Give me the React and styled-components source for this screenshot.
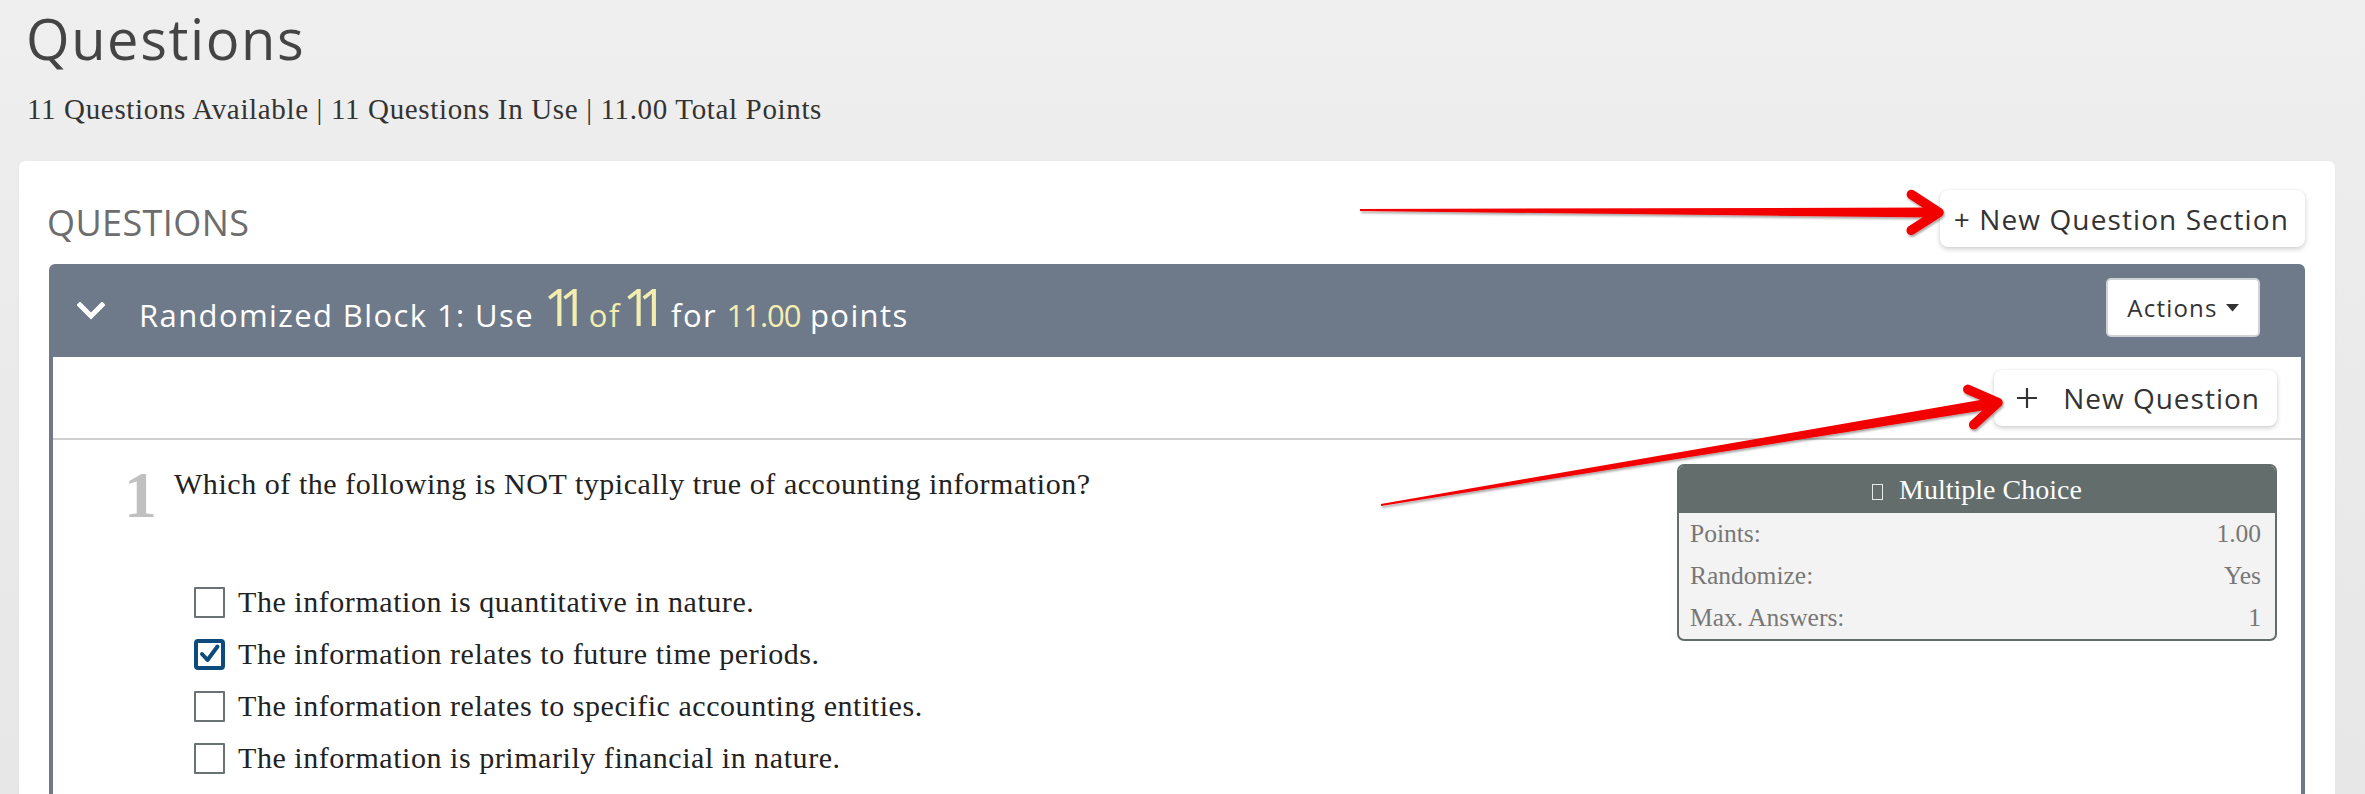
import React from "react";
import styled, { createGlobalStyle } from "styled-components";

const GlobalStyle = createGlobalStyle`
  html, body { margin: 0; padding: 0; }
  body {
    background: linear-gradient(to bottom, #efefef 0%, #ebebeb 40%, #e7e7e7 100%);
    font-family: "Open Sans", sans-serif;
  }
  * { box-sizing: border-box; }
`;

const Page = styled.div`
  position: relative;
  height: 794px;
  overflow: hidden;
  padding: 0 30px 0 19px;
`;

const Title = styled.h1`
  margin: 0;
  padding: 10px 0 0 7px;
  font: 400 56px/56px "Open Sans", sans-serif;
  letter-spacing: 1.6px;
  color: #444;
`;

const Summary = styled.div`
  margin-top: 29px;
  padding-left: 8px;
  font: 400 29px/29px "Liberation Serif", serif;
  letter-spacing: 0.65px;
  color: #333;
`;

const Card = styled.section`
  margin-top: 37px;
  background: #fff;
  border-radius: 6px 6px 0 0;
  padding: 0 30px;
  min-height: 640px;
  box-shadow: 0 0 3px rgba(0, 0, 0, 0.04);
`;

const CardHeader = styled.div`
  display: flex;
  justify-content: space-between;
  align-items: flex-start;
  padding-top: 29px;
`;

const SectionHeading = styled.h2`
  margin: 15px 0 0 -2px;
  font: 400 36px/36px "Open Sans", sans-serif;
  letter-spacing: 0.4px;
  color: #6d6d6d;
`;

const RaisedButton = styled.button`
  display: inline-flex;
  align-items: center;
  gap: ${(p) => p.$gap || 0}px;
  height: ${(p) => p.$h || 57}px;
  padding: 0 ${(p) => p.$pr || 16}px 0 ${(p) => p.$pl || 14}px;
  background: #fff;
  border: none;
  border-radius: 8px;
  box-shadow: 0 2px 5px rgba(0, 0, 0, 0.2), 0 0 1px rgba(0, 0, 0, 0.08);
  font: 400 28px/1 "Open Sans", sans-serif;
  letter-spacing: ${(p) => p.$ls ?? 1.1}px;
  color: #333;
  cursor: pointer;
`;

const Block = styled.div`
  margin-top: 17px;
`;

const BlockHeader = styled.div`
  display: flex;
  align-items: center;
  height: 93px;
  padding: 0 45px 0 28px;
  background: #6e7a89;
  border-radius: 6px 6px 0 0;
`;

const BlockTitle = styled.div`
  flex: 1;
  margin-left: 34px;
  font: 400 31px/50px "Open Sans", sans-serif;
  letter-spacing: 1.4px;
  color: #fff;
  white-space: nowrap;
`;

const Hl = styled.span`
  color: #f3eeb0;
  letter-spacing: ${(p) => p.$ls ?? 1.4}px;
`;

const BigNum = styled.span`
  color: #f3eeb0;
  font-size: 51px;
  letter-spacing: -14px;
  margin-right: 12px;
  position: relative;
  top: -1px;
`;

const Gap = styled.span`
  display: inline-block;
  width: ${(p) => p.$w}px;
`;

const ActionsButton = styled.button`
  display: inline-flex;
  align-items: center;
  gap: 8px;
  height: 59px;
  width: 154px;
  justify-content: center;
  background: #fff;
  border: 2px solid #cfd2d6;
  border-radius: 5px;
  font: 400 24px/1 "Open Sans", sans-serif;
  letter-spacing: 1.2px;
  color: #333;
  margin-top: -6px;
`;

const BlockBody = styled.div`
  background: #fff;
  border-left: 4px solid #6e7a89;
  border-right: 4px solid #6e7a89;
  min-height: 500px;
`;

const Toolbar = styled.div`
  display: flex;
  justify-content: flex-end;
  padding: 13px 24px 12px;
  border-bottom: 2px solid #d0d0d0;
`;

const QuestionRow = styled.div`
  display: flex;
  align-items: flex-start;
  padding: 22px 24px 0 71px;
`;

const QNum = styled.div`
  font: 700 66px/66px "Liberation Serif", serif;
  color: #c0c0c0;
  width: 50px;
`;

const QMain = styled.div`
  flex: 1;
  margin-top: 2px;
`;

const QText = styled.div`
  font: 400 30px/40px "Liberation Serif", serif;
  letter-spacing: 0.55px;
  color: #222;
`;

const Options = styled.div`
  margin: 72px 0 0 20px;
  display: flex;
  flex-direction: column;
`;

const Option = styled.label`
  display: flex;
  align-items: center;
  gap: 13px;
  height: 52px;
  font: 400 30px/52px "Liberation Serif", serif;
  letter-spacing: 0.55px;
  color: #222;
`;

const Box = styled.span`
  flex: none;
  width: 31px;
  height: 31px;
  border: ${(p) => (p.$checked ? "4px solid #0d4b7c" : "2px solid #6b7274")};
  border-radius: ${(p) => (p.$checked ? 4 : 1)}px;
  background: #fff;
  display: flex;
  align-items: center;
  justify-content: center;
`;

const InfoBox = styled.div`
  flex: none;
  width: 600px;
  margin-top: 2px;
  border: 2px solid #636e6c;
  border-radius: 7px;
  overflow: hidden;
  background: #f3f3f3;
`;

const InfoHead = styled.div`
  height: 47px;
  display: flex;
  align-items: center;
  justify-content: center;
  background: #636e6c;
  color: #fff;
  font: 400 28px/1 "Liberation Serif", serif;
`;

const Tofu = styled.span`
  display: inline-block;
  width: 11px;
  height: 16px;
  border: 1px solid #e8e8e8;
  margin: 4px 16px 0 0;
`;

const InfoRow = styled.div`
  display: flex;
  justify-content: space-between;
  height: 42px;
  padding: 0 14px 0 11px;
  font: 400 25.5px/42px "Liberation Serif", serif;
  color: #777;
`;

const Overlay = styled.svg`
  position: absolute;
  left: 0;
  top: 0;
  pointer-events: none;
`;

function Chevron() {
  return (
    <svg width="28" height="18" viewBox="0 0 28 18">
      <path d="M3 3 L14 14 L25 3" fill="none" stroke="#fff" strokeWidth="5" strokeLinecap="square" strokeLinejoin="miter" />
    </svg>
  );
}

function Caret() {
  return (
    <svg width="13" height="8" viewBox="0 0 13 8">
      <path d="M0 0 H13 L6.5 7.5 Z" fill="#333" />
    </svg>
  );
}

function Plus() {
  return (
    <svg width="22" height="22" viewBox="0 0 22 22">
      <path d="M11 1 V21 M1 11 H21" stroke="#333" strokeWidth="2.2" />
    </svg>
  );
}

function Check() {
  return (
    <svg width="23" height="23" viewBox="0 0 23 23">
      <path d="M4 11 L9.5 17 L19.5 3.5" fill="none" stroke="#0d4b7c" strokeWidth="4" strokeLinecap="round" strokeLinejoin="round" />
    </svg>
  );
}

function Arrow({ from, to, tailW = 2, headW = 10, arm = 33, spread = 33, sw = 9.5 }) {
  const [x1, y1] = from;
  const [x2, y2] = to;
  const dx = x2 - x1;
  const dy = y2 - y1;
  const len = Math.hypot(dx, dy);
  const ux = dx / len;
  const uy = dy / len;
  const px = -uy;
  const py = ux;
  const ex = x2 - ux * 4;
  const ey = y2 - uy * 4;
  const pts = [
    [x1 + (px * tailW) / 2, y1 + (py * tailW) / 2],
    [ex + (px * headW) / 2, ey + (py * headW) / 2],
    [ex - (px * headW) / 2, ey - (py * headW) / 2],
    [x1 - (px * tailW) / 2, y1 - (py * tailW) / 2],
  ];
  const bx = -ux;
  const by = -uy;
  const a = (spread * Math.PI) / 180;
  const rot = (ang) => [bx * Math.cos(ang) - by * Math.sin(ang), bx * Math.sin(ang) + by * Math.cos(ang)];
  const [ax, ay] = rot(a);
  const [cx, cy] = rot(-a);
  return (
    <g filter="url(#ashadow)">
      <polygon points={pts.map((p) => p.join(",")).join(" ")} fill="#f20000" />
      <polyline
        points={`${x2 + ax * arm},${y2 + ay * arm} ${x2},${y2} ${x2 + cx * arm},${y2 + cy * arm}`}
        fill="none"
        stroke="#f20000"
        strokeWidth={sw}
        strokeLinecap="round"
        strokeLinejoin="round"
      />
    </g>
  );
}

const options = [
  { text: "The information is quantitative in nature.", checked: false },
  { text: "The information relates to future time periods.", checked: true },
  { text: "The information relates to specific accounting entities.", checked: false },
  { text: "The information is primarily financial in nature.", checked: false },
];

const info = [
  ["Points:", "1.00"],
  ["Randomize:", "Yes"],
  ["Max. Answers:", "1"],
];

export default function App() {
  return (
    <>
      <GlobalStyle />
      <Page>
        <Title>Questions</Title>
        <Summary>11 Questions Available | 11 Questions In Use | 11.00 Total Points</Summary>
        <Card>
          <CardHeader>
            <SectionHeading>QUESTIONS</SectionHeading>
            <RaisedButton>+ New Question Section</RaisedButton>
          </CardHeader>
          <Block>
            <BlockHeader>
              <Chevron />
              <BlockTitle>
                Randomized Block 1: Use <BigNum>11</BigNum>
                <Gap $w={3} />
                <Hl>of</Hl>
                <Gap $w={2} />
                <BigNum>11</BigNum>
                <Gap $w={6} />
                for <Hl $ls={-1}>11.00</Hl> points
              </BlockTitle>
              <ActionsButton>
                Actions
                <Caret />
              </ActionsButton>
            </BlockHeader>
            <BlockBody>
              <Toolbar>
                <RaisedButton $h={56} $pl={22} $pr={17} $gap={25} $ls={1}>
                  <Plus />
                  New Question
                </RaisedButton>
              </Toolbar>
              <QuestionRow>
                <QNum>1</QNum>
                <QMain>
                  <QText>Which of the following is NOT typically true of accounting information?</QText>
                  <Options>
                    {options.map((o) => (
                      <Option key={o.text}>
                        <Box $checked={o.checked}>{o.checked && <Check />}</Box>
                        {o.text}
                      </Option>
                    ))}
                  </Options>
                </QMain>
                <InfoBox>
                  <InfoHead>
                    <Tofu />
                    Multiple Choice
                  </InfoHead>
                  {info.map(([k, v]) => (
                    <InfoRow key={k}>
                      <span>{k}</span>
                      <span>{v}</span>
                    </InfoRow>
                  ))}
                </InfoBox>
              </QuestionRow>
            </BlockBody>
          </Block>
        </Card>
        <Overlay width="2365" height="794" viewBox="0 0 2365 794">
          <defs>
            <filter id="ashadow" x="-10%" y="-50%" width="120%" height="200%">
              <feDropShadow dx="1" dy="2" stdDeviation="1" floodColor="#000" floodOpacity="0.35" />
            </filter>
          </defs>
          <Arrow from={[1360, 210]} to={[1939, 212.5]} />
          <Arrow from={[1381, 505]} to={[1998, 402.5]} tailW={2} headW={11} />
        </Overlay>
      </Page>
    </>
  );
}
